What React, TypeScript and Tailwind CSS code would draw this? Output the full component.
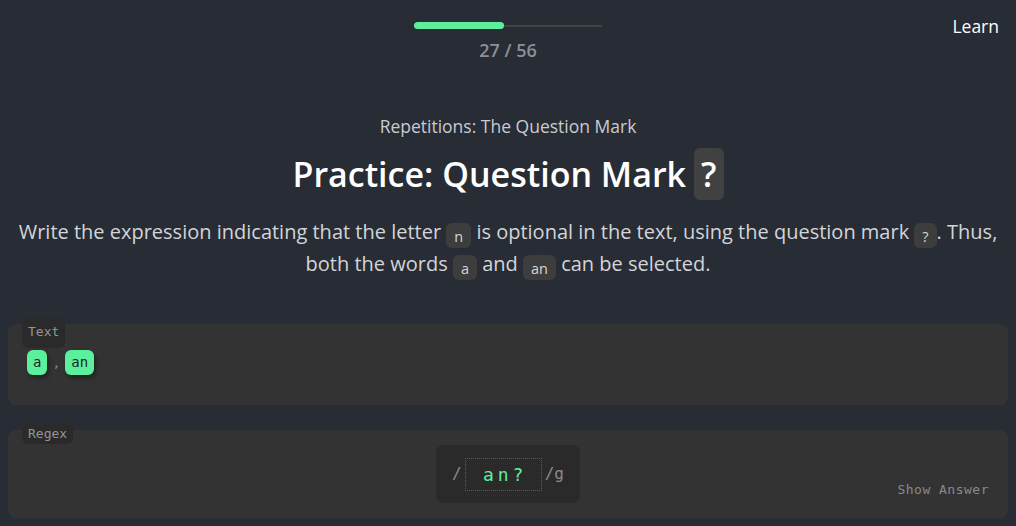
import React from 'react'

const mono = "font-['DejaVu_Sans_Mono',monospace]"

function Code({ children }: { children: React.ReactNode }) {
  return (
    <span className="inline-flex h-[25px] items-center rounded-md bg-[#3d3d3d] px-[8px] pt-[3px] align-[-3px] text-[14.5px] leading-[20px] text-[#d6d6d6]">
      {children}
    </span>
  )
}

function Chip({ children }: { children: React.ReactNode }) {
  return (
    <span
      className={`${mono} inline-flex h-[25px] items-center rounded-md bg-[#5cf09c] px-[6px] text-[14px] text-[#1d2a22] shadow-[2px_3px_4px_rgba(0,0,0,0.35)]`}
    >
      {children}
    </span>
  )
}

function Label({ children, tall }: { children: React.ReactNode; tall?: boolean }) {
  return (
    <span
      className={`${mono} absolute left-[14px] rounded-md bg-[#2a2a2a] px-[6px] text-[13px] text-[#959595] ${
        tall ? '-top-[6px] h-[30px] pt-[4px]' : '-top-[7px] h-[21px] leading-[21px]'
      }`}
    >
      {children}
    </span>
  )
}

export default function App() {
  const done = 27
  const total = 56

  return (
    <div className="min-h-[526px] w-full bg-[#282c34] pb-2 font-['Open_Sans',sans-serif] text-white">
      <header className="grid grid-cols-[1fr_auto_1fr]">
        <div />
        <div className="flex flex-col items-center pt-[22px]">
          <div className="flex h-[7px] w-[188px] items-center">
            <div className="h-[7px] rounded-full bg-[#5cf09c]" style={{ width: `${(done / total) * 188 - 0.5}px` }} />
            <div className="h-[2px] flex-1 bg-[#444]" />
          </div>
          <div className="mt-[9px] text-[18px] font-semibold leading-6 text-[#8c9097]">
            {done} / {total}
          </div>
        </div>
        <div className="flex justify-end pr-[17px] pt-[14px]">
          <span className="text-[17.5px] leading-6">Learn</span>
        </div>
      </header>

      <main className="flex flex-col items-center px-4 text-center">
        <p className="mt-[52px] text-[17.5px] leading-6 text-[#c8cbd0]">Repetitions: The Question Mark</p>
        <h1 className="mt-[10px] flex h-[52px] items-center gap-[8px] text-[34px] font-semibold">
          <span>Practice: Question Mark</span>
          <span className="flex h-[52px] items-center rounded-md bg-[#414141] px-[7px]">?</span>
        </h1>
        <p className="mt-4 text-[20px] leading-8 text-[#d2d5da]">
          Write the expression indicating that the letter <Code>n</Code> is optional in the text, using the
          question mark <Code>?</Code>. Thus, both the words <Code>a</Code> and <Code>an</Code> can be selected.
        </p>
      </main>

      <section className="relative mx-2 mt-[44px] h-[81px] rounded-lg bg-[#333333]">
        <Label tall>Text</Label>
        <div className="flex items-center gap-[5px] pl-[19px] pt-[26px]">
          <Chip>a</Chip>
          <span className={`${mono} text-[13px] text-[#8a8a8a]`}>,</span>
          <Chip>an</Chip>
        </div>
      </section>

      <section className="relative mx-2 mt-[25px] grid grid-cols-[1fr_auto_1fr] rounded-lg bg-[#333333] py-[15px]">
        <Label>Regex</Label>
        <div />
        <div className={`${mono} flex h-[58px] items-center rounded-lg bg-[#2a2a2a] px-[16px] text-[16px] text-[#8a8a8a]`}>
          <span>/</span>
          <span className="mx-[3px] flex h-[33px] w-[77px] items-center justify-center border border-dotted border-[#5a5a5a] pl-[4px] text-[18px] tracking-[4px] text-[#5cf09c]">
            an?
          </span>
          <span>/g</span>
        </div>
        <div className="flex items-end justify-end pb-[5px] pr-[19px]">
          <span className={`${mono} text-[13px] leading-4 tracking-[0.5px] text-[#8a8a8a]`}>Show Answer</span>
        </div>
      </section>
    </div>
  )
}
